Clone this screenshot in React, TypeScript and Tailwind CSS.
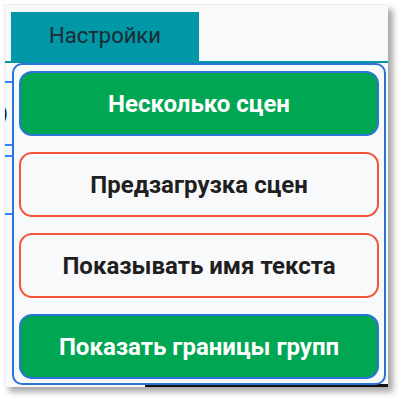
import React from "react";

const buttons = [
  { label: "Несколько сцен", on: true },
  { label: "Предзагрузка сцен", on: false },
  { label: "Показывать имя текста", on: false },
  { label: "Показать границы групп", on: true },
];

export default function App() {
  return (
    <div
      className="h-[401px] w-[402px] overflow-hidden bg-white pl-[4px] pt-[4px]"
      style={{ fontFamily: "Roboto, 'Noto Sans', sans-serif" }}
    >
      <div className="relative flex h-[383px] w-[384px] flex-col overflow-hidden border-l border-t border-[#eceef1] bg-[#f8f9fb] shadow-[5px_5px_6px_rgba(0,0,0,0.35)]">
        {/* tab strip */}
        <div className="flex h-[58px] shrink-0 items-end border-b-2 border-[#0097a7] pl-[6px]">
          <div className="flex h-[49px] w-[188px] items-center justify-center bg-[#0097a7] pb-[2px] text-[22px] text-[#1d2a30]">
            Настройки
          </div>
        </div>

        {/* table underneath, mostly hidden by the dropdown */}
        <div className="flex flex-1 flex-col">
          <div className="flex w-[8px] flex-col pt-[18px]">
            <div className="h-[2px] w-[7px] bg-[#3b82f6]" />
            <div className="h-[28px] text-[20px] leading-[28px] text-[#222] [text-indent:-4px] mt-[16px]">)</div>
            <div className="mt-[17px] h-[2px] w-[7px] bg-[#3b82f6]" />
            <div className="mt-[9px] h-[2px] w-[7px] bg-[#3b82f6]" />
            <div className="mt-[56px] h-[2px] w-[7px] bg-[#3b82f6]" />
          </div>
          <div className="mt-auto flex justify-end">
            <div className="h-[3px] w-[243px] bg-[#111]" />
          </div>
        </div>

        {/* dropdown */}
        <div className="absolute left-[7px] top-[58px] flex w-[374px] flex-col gap-[16px] rounded-[10px] border-2 border-[#2a73d8] bg-[#f8f9fb] px-[5px] pb-[4px] pt-[6px]">
          {buttons.map((b) => (
            <button
              key={b.label}
              type="button"
              className={
                b.on
                  ? "flex h-[65px] items-center justify-center rounded-[13px] border-2 border-[#2a73d8] bg-[#00a651] text-[24px] font-bold text-white"
                  : "flex h-[65px] items-center justify-center rounded-[13px] border-2 border-[#f2553c] bg-[#f8f9fb] text-[24px] font-bold text-[#1f1f1f]"
              }
            >
              {b.label}
            </button>
          ))}
        </div>
      </div>
    </div>
  );
}
